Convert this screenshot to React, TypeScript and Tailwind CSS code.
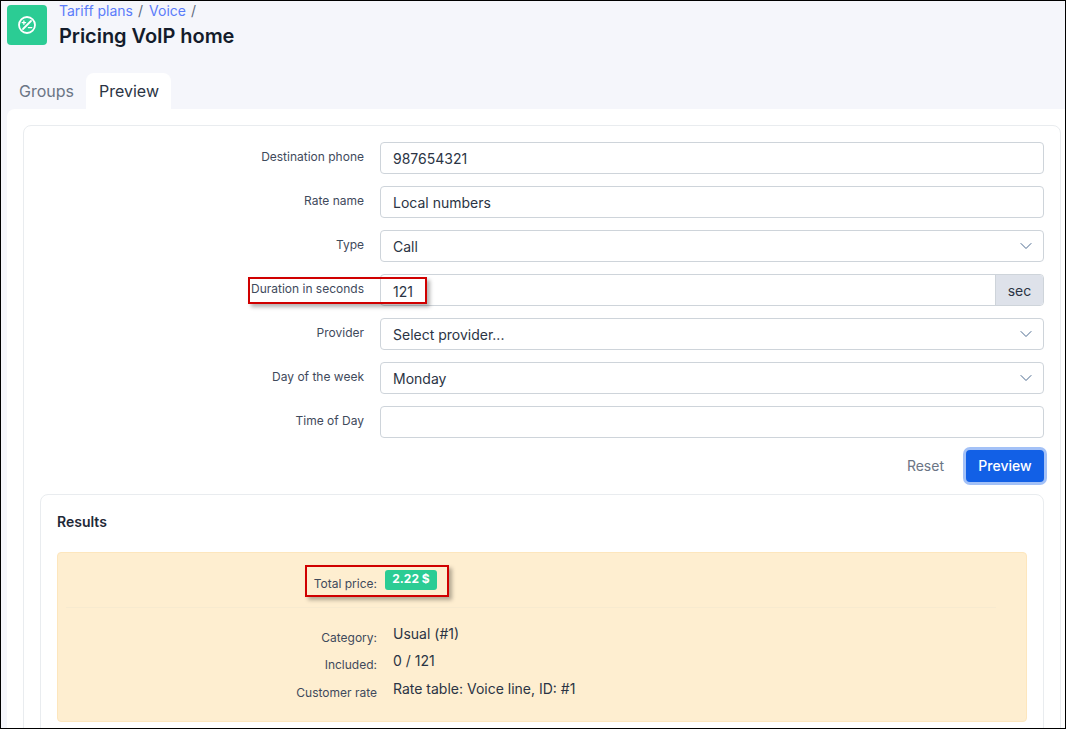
import React from "react";
import { ChevronDown } from "lucide-react";

const labelClass = "w-[340px] pr-[16px] text-right text-[12px] leading-[18px] text-[#3f4a5c] -mt-[2px]";
const boxClass = "flex-1 h-[32px] border border-[#ced4da] rounded-[4px] bg-white flex items-center justify-between pl-[12px] pr-[7px] text-[14px] text-[#2b3444]";

const Row = ({ label, children }: { label: string; children?: React.ReactNode }) => (
  <div className="flex items-center h-[32px]">
    <div className={labelClass}>{label}</div>
    {children}
  </div>
);

const TextBox = ({ value }: { value?: string }) => (
  <div className={boxClass}>
    <span className="mt-[1px]">{value}</span>
  </div>
);

const SelectBox = ({ value }: { value: string }) => (
  <div className={boxClass}>
    <span>{value}</span>
    <ChevronDown size={20} strokeWidth={1.2} className="text-[#4b6a90]" />
  </div>
);

const ResultRow = ({ label, value }: { label: string; value: string }) => (
  <div className="flex h-[27.5px]">
    <div className="w-[319px] pt-[3px] text-right text-[12px] leading-[18px] text-[#3f4a5c]">{label}</div>
    <div className="ml-[16px] -mt-[1px] text-[14px] leading-[18px] text-[#2b3444]">{value}</div>
  </div>
);

export default function App() {
  return (
    <div className="relative w-[1066px] h-[729px] overflow-hidden bg-[#f5f6fb] border border-black font-['Inter','Noto_Sans',sans-serif]">
      <div className="flex h-[72px] pl-[6px] pt-[4px]">
        <div className="w-[40px] h-[40px] rounded-[4px] bg-[#2bcc94] flex items-center justify-center">
          <svg width="20" height="20" viewBox="0 0 20 20" fill="none" stroke="white" strokeWidth="1.8" strokeLinecap="round">
            <circle cx="10" cy="10" r="8" />
            <path d="M6 14 14 6" />
            <path d="M5.2 7.6h3.4M6.9 5.9v3.4" strokeWidth="1.3" />
            <path d="M11.4 12.6h3.4" strokeWidth="1.3" />
          </svg>
        </div>
        <div className="ml-[12px] -mt-[1px]">
          <div className="flex gap-[5px] text-[14px] leading-[14px] text-[#5b7cfa]">
            <span>Tariff plans</span>
            <span className="text-[#5f6b7c]">/</span>
            <span className="ml-[1px]">Voice</span>
            <span className="text-[#5f6b7c]">/</span>
          </div>
          <div className="mt-[4px] text-[20px] leading-[28px] font-semibold tracking-[-0.05px] text-[#141c2b]">Pricing VoIP home</div>
        </div>
      </div>

      <div className="flex h-[36px] pl-[6px]">
        <div className="px-[12px] pt-[8px] text-[16px] leading-[20px] text-[#6b7585]">Groups</div>
        <div className="px-[13px] pt-[8px] text-[16px] leading-[20px] text-[#2b3444] bg-white rounded-t-[8px] w-[85px]">Preview</div>
      </div>

      <div className="ml-[6px] h-[620px] bg-white rounded-tl-[8px] pt-[16px] pl-[16px] pr-[4px]">
        <div className="h-[620px] border border-[#e9ecef] rounded-[8px] pl-[16px] pr-[16px] pt-[16px]">
          <div className="flex flex-col gap-[12px]">
            <Row label="Destination phone"><TextBox value="987654321" /></Row>
            <Row label="Rate name"><TextBox value="Local numbers" /></Row>
            <Row label="Type"><SelectBox value="Call" /></Row>
            <Row label="Duration in seconds">
              <div className="flex-1 flex h-[32px] border border-[#ced4da] rounded-[4px] overflow-hidden text-[14px] text-[#2b3444]">
                <div className="flex-1 pl-[12px] pt-[2px] flex items-center">121</div>
                <div className="w-[48px] bg-[#dee2ea] border-l border-[#ced4da] flex items-center justify-center">sec</div>
              </div>
            </Row>
            <Row label="Provider"><SelectBox value="Select provider..." /></Row>
            <Row label="Day of the week"><SelectBox value="Monday" /></Row>
            <Row label="Time of Day"><TextBox /></Row>
          </div>

          <div className="flex justify-end items-center mt-[12px] h-[32px]">
            <span className="text-[14px] text-[#6b7585] mr-[22px] -mt-[1px]">Reset</span>
            <span className="h-[32px] w-[78px] rounded-[4px] bg-[#1260e6] ring-[3px] ring-[#a3c1f7] text-white text-[14px] font-medium flex items-center justify-center -mt-[1px]">Preview</span>
          </div>

          <div className="mt-[12px] h-[400px] border border-[#e9ecef] rounded-[8px] p-[16px]">
            <div className="text-[14px] leading-[22px] font-semibold text-[#1f2937]">Results</div>
            <div className="mt-[19px] h-[170px] bg-[#feeed0] border border-[#fde6bd] rounded-[4px]">
              <div className="flex h-[55px] mx-[8px] border-b border-[#f7eacf] w-[930px]">
                <div className="w-[311px] pt-[22px] text-right text-[12px] leading-[18px] text-[#3f4a5c]">Total price:</div>
                <div className="ml-[8px] mt-[17px] h-[20px] w-[52px] rounded-[3px] bg-[#2bcc94] text-white text-[12px] font-bold leading-[18px] text-center">2.22 $</div>
              </div>
              <div className="pt-[17.75px]">
                <ResultRow label="Category:" value="Usual (#1)" />
                <ResultRow label="Included:" value="0 / 121" />
                <ResultRow label="Customer rate" value="Rate table: Voice line, ID: #1" />
              </div>
            </div>
          </div>
        </div>
      </div>

      {/* annotations drawn over the screenshot */}
      <div className="absolute left-[247px] top-[276px] w-[179px] h-[27px] border-2 border-[#d00000] shadow-[3px_3px_4px_rgba(0,0,0,0.3)]" />
      <div className="absolute left-[304px] top-[564px] w-[144px] h-[32px] border-2 border-[#d00000] shadow-[3px_3px_4px_rgba(0,0,0,0.3)]" />
    </div>
  );
}
